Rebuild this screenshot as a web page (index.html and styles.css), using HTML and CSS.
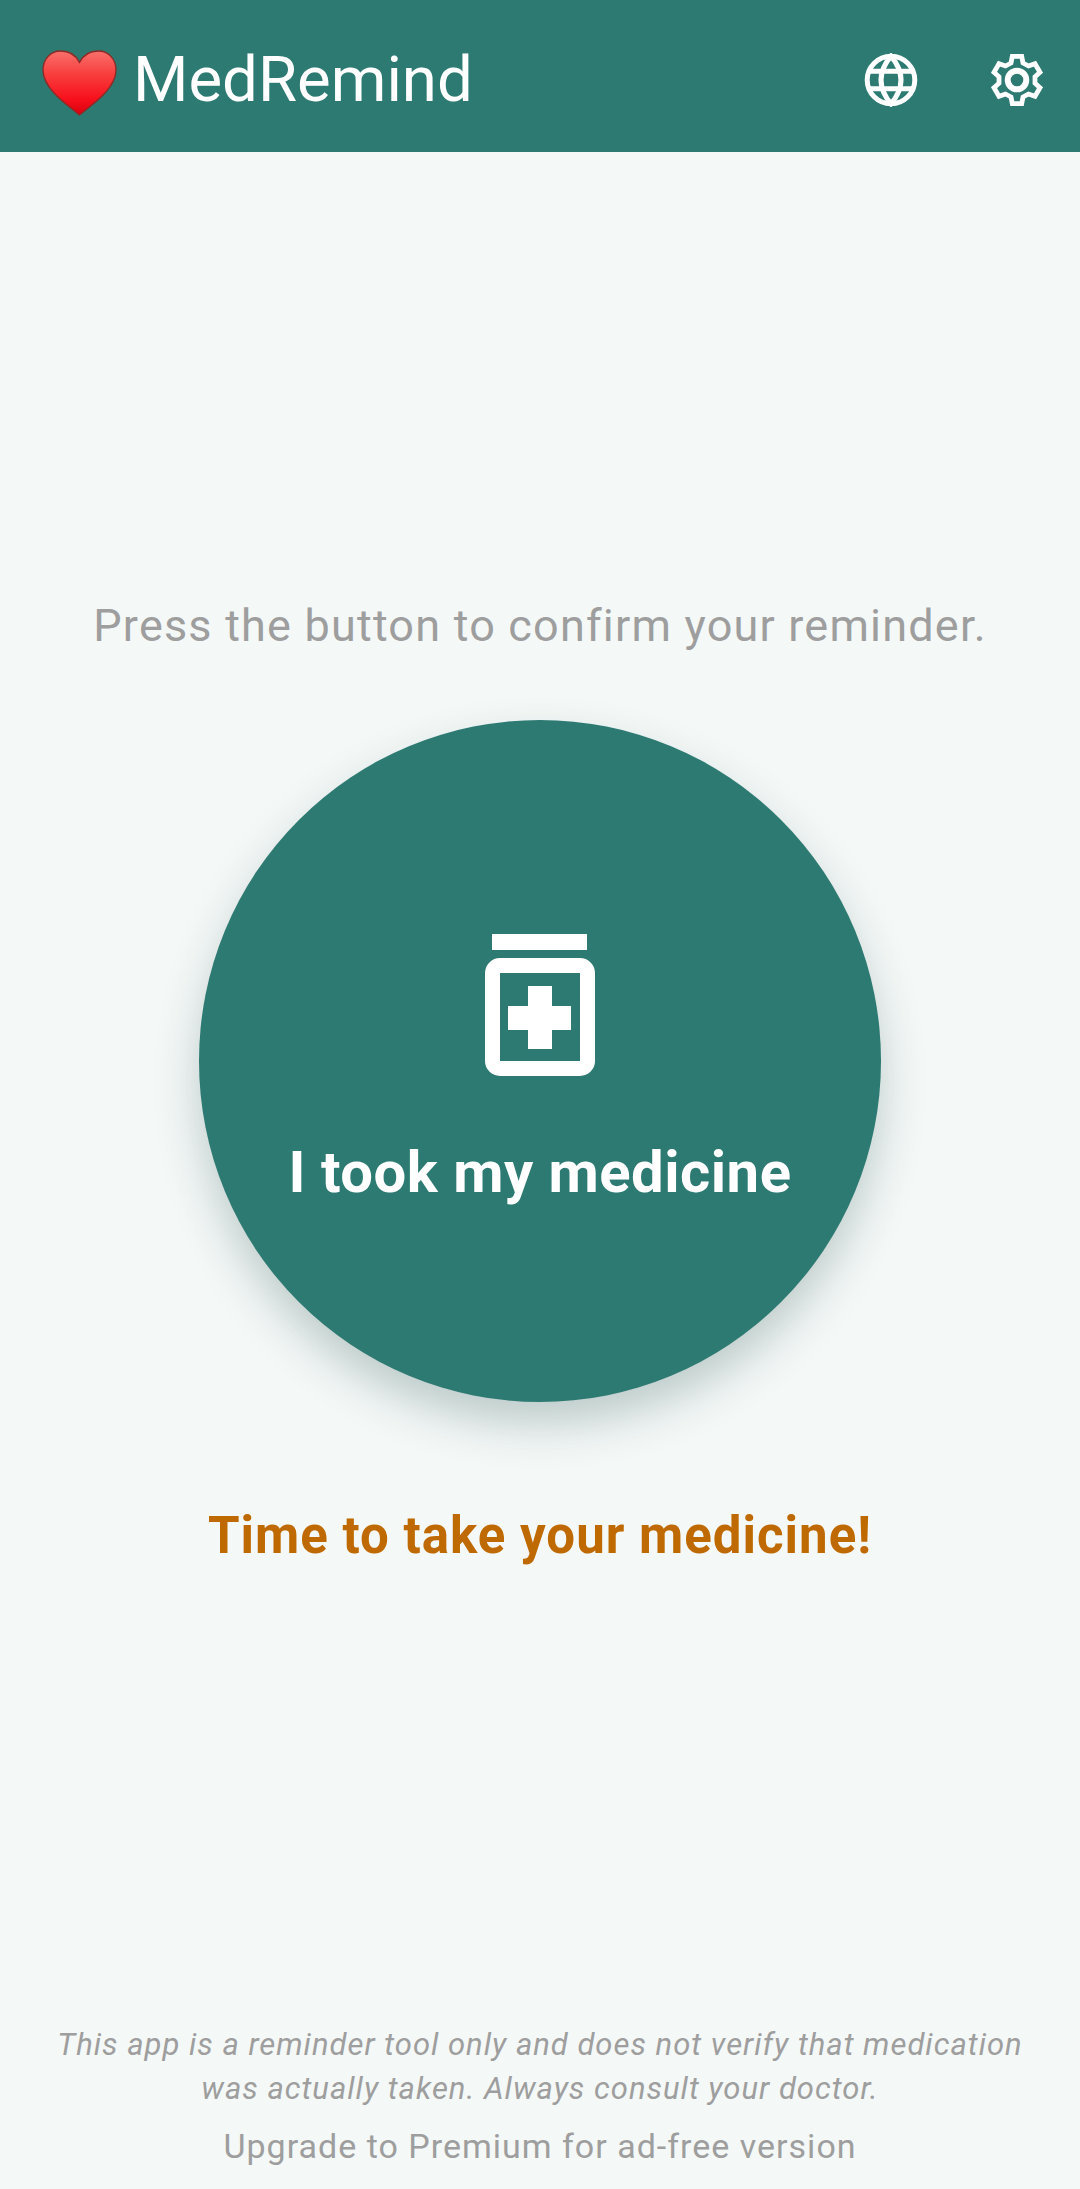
FILE: index.html
```html
<!DOCTYPE html>
<html lang="en">
<head>
<meta charset="utf-8">
<title>MedRemind</title>
<link rel="stylesheet" href="styles.css">
</head>
<body>
<div class="app">
  <header class="bar">
    <svg class="heart" viewBox="0 0 72 64" preserveAspectRatio="none" aria-hidden="true">
      <defs>
        <linearGradient id="heartFill" x1="0" y1="0" x2="0" y2="1">
          <stop offset="0" stop-color="#f9706c"/>
          <stop offset="0.35" stop-color="#f8403f"/>
          <stop offset="0.75" stop-color="#f7101c"/>
          <stop offset="1" stop-color="#d9000f"/>
        </linearGradient>
      </defs>
      <path d="M36 63C27 55 1.500 39 1 20 .7 9 8 1 18 1c8 0 14.500 4 18 11C39.500 5 46 1 54 1c10 0 17.300 8 17 19-.5 19-26 35-35 43z" fill="url(#heartFill)" stroke="#8e2a24" stroke-width="1.300"/>
    </svg>
    <h1 class="title">MedRemind</h1>
    <div class="actions">
      <button class="icon-btn" aria-label="Language">
        <svg class="globe" viewBox="0 0 54 54" fill="none" stroke="#fff" stroke-width="5">
          <circle cx="27" cy="27" r="23.800"/>
          <path d="M27 3.200Q7 27 27 50.800Q47 27 27 3.200z"/>
          <path d="M5 18.300h44M5 35.700h44"/>
        </svg>
      </button>
      <button class="icon-btn" aria-label="Settings">
        <svg class="gear" viewBox="0 0 54 54" fill="none" stroke="#fff" stroke-width="4.800" stroke-linejoin="miter">
          <g transform="translate(27 27)">
            <path d="M-6-17-4.700-23.600H4.700L6-17 11.500-14 18-16.300 23-7.800 18-3.200V3.200L23 7.800 18 16.300 11.500 14 6 17 4.700 23.600H-4.700L-6 17-11.500 14-18 16.300-23 7.800-18 3.200V-3.200L-23-7.800-18-16.300-11.500-14z"/>
            <circle r="9.300" stroke-width="6"/>
          </g>
        </svg>
      </button>
    </div>
  </header>

  <main class="content">
    <p class="prompt">Press the button to confirm your reminder.</p>
    <button class="take">
      <svg class="bottle" viewBox="0 0 110 142" aria-hidden="true">
        <path fill="#fff" d="M7 0h95v16H7z"/>
        <path fill="#fff" fill-rule="evenodd" d="M15 24h80a15 15 0 0 1 15 15v88a15 15 0 0 1-15 15H15a15 15 0 0 1-15-15V39a15 15 0 0 1 15-15zM15 39v88h80V39z"/>
        <path fill="#fff" d="M43 52h24v20h19v24H67v19H43V96H23V72h20z"/>
      </svg>
      <span class="take-label">I took my medicine</span>
    </button>
    <p class="status">Time to take your medicine!</p>
  </main>

  <footer class="foot">
    <p class="disclaimer">This app is a reminder tool only and does not verify that medication was actually taken. Always consult your doctor.</p>
    <p class="upgrade">Upgrade to Premium for ad-free version</p>
  </footer>
</div>
</body>
</html>
```

FILE: styles.css
```css
* { box-sizing: border-box; }

html, body {
  margin: 0;
  padding: 0;
}

body {
  background: #f4f8f7;
  font-family: Roboto, "Liberation Sans", sans-serif;
}

.app {
  display: flex;
  flex-direction: column;
  height: 2189px;
  overflow: hidden;
}

.bar {
  display: flex;
  align-items: center;
  flex: none;
  height: 152px;
  padding: 7px 36px 0 42px;
  background: #2d7a72;
  color: #fff;
}

.heart {
  width: 75px;
  height: 66px;
  margin-top: 7px;
}

.title {
  margin: 0 0 0 16px;
  font-size: 63.5px;
  font-weight: 400;
  line-height: 1;
}

.actions {
  display: flex;
  align-items: center;
  gap: 72px;
  margin-left: auto;
}

.icon-btn {
  display: flex;
  padding: 0;
  border: 0;
  background: none;
}

.globe, .gear {
  width: 54px;
  height: 54px;
}

.content {
  flex: 1;
  display: flex;
  flex-direction: column;
  align-items: center;
  padding-top: 446px;
}

.prompt {
  margin: 0;
  font-size: 45px;
  line-height: 56px;
  letter-spacing: 1.2px;
  color: #9e9e9e;
  white-space: nowrap;
}

.take {
  display: flex;
  flex-direction: column;
  align-items: center;
  width: 682px;
  height: 682px;
  margin-top: 66px;
  padding: 214px 0 0;
  border: 0;
  border-radius: 50%;
  background: #2d7a72;
  box-shadow: 0 22px 44px rgba(45, 90, 85, 0.28);
  font-family: inherit;
}

.bottle {
  width: 110px;
  height: 142px;
}

.take-label {
  margin-top: 61px;
  font-size: 58px;
  font-weight: 700;
  line-height: 70px;
  letter-spacing: 0.5px;
  color: #fff;
  white-space: nowrap;
}

.status {
  margin: 104px 0 0;
  font-size: 51px;
  font-weight: 700;
  line-height: 60px;
  letter-spacing: 1px;
  color: #bf6a00;
  white-space: nowrap;
}

.foot {
  flex: none;
  padding: 0 30px 21px;
  text-align: center;
  color: #9e9e9e;
}

.disclaimer {
  margin: 0;
  font-size: 31px;
  font-style: italic;
  line-height: 44px;
  letter-spacing: 1px;
}

.upgrade {
  margin: 13px 0 0;
  font-size: 34px;
  line-height: 44px;
  letter-spacing: 1px;
}
```
